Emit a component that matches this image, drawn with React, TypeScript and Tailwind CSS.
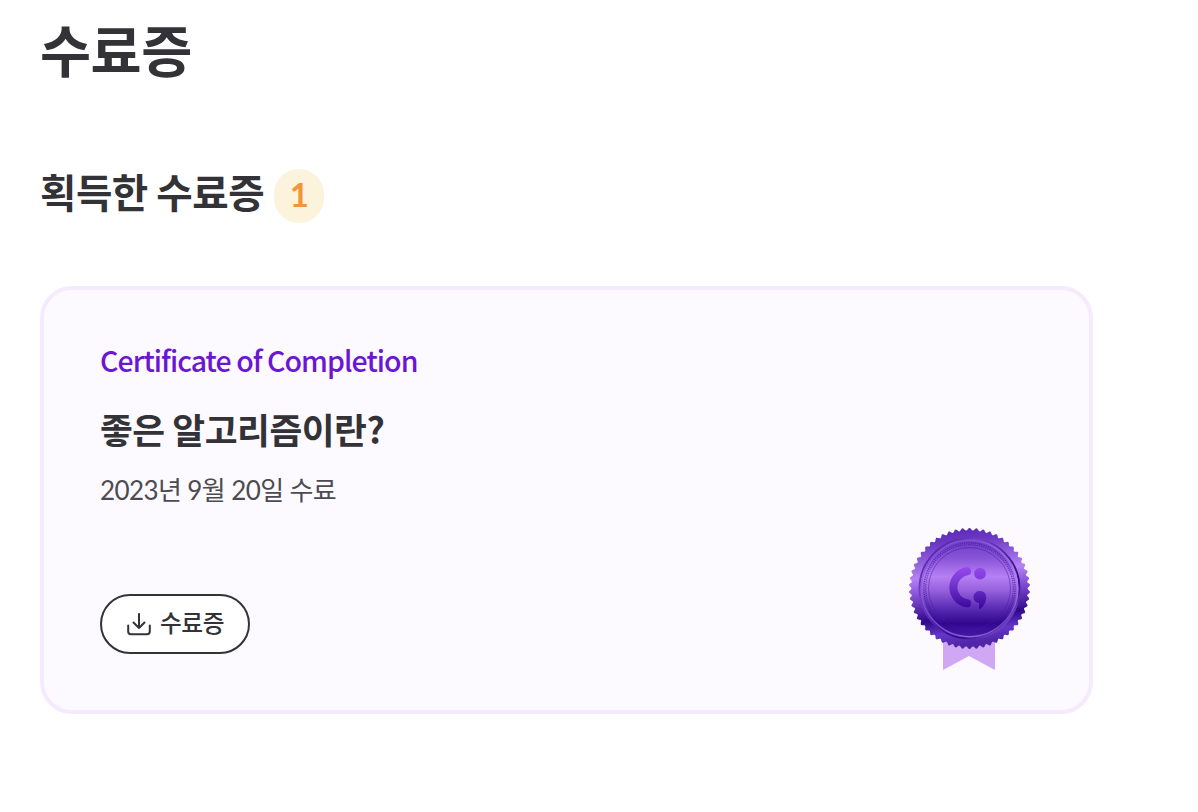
const BADGE_CENTER = 61.5;
const TEETH = 54;

// scalloped outline of the seal
const sealPath = (() => {
  const steps = TEETH * 8;
  const points: string[] = [];
  for (let i = 0; i < steps; i++) {
    const angle = (i / steps) * Math.PI * 2;
    const radius = 59.3 + Math.cos(angle * TEETH) * 1.3;
    const x = BADGE_CENTER + Math.sin(angle) * radius;
    const y = BADGE_CENTER - Math.cos(angle) * radius;
    points.push(`${x.toFixed(2)} ${y.toFixed(2)}`);
  }
  return `M${points.join("L")}Z`;
})();

const DownloadIcon = () => (
  <svg
    width="24"
    height="24"
    viewBox="0 0 24 24"
    fill="none"
    stroke="currentColor"
    strokeWidth="2"
    strokeLinecap="round"
    strokeLinejoin="round"
    aria-hidden="true"
  >
    <path d="M1.2 13.5v6a2.8 2.8 0 0 0 2.8 2.8h16a2.8 2.8 0 0 0 2.8-2.8v-6" />
    <path d="M12 2v14M6.5 10.5l5.5 5.5 5.5-5.5" />
  </svg>
);

const SealBadge = () => (
  <svg width="123" height="144" viewBox="0 0 123 144" aria-hidden="true">
    <defs>
      <linearGradient id="seal-edge" x1="0" y1="0" x2="0.12" y2="1">
        <stop offset="0" stopColor="#5527ac" />
        <stop offset="0.15" stopColor="#6936c4" />
        <stop offset="0.42" stopColor="#b583f2" />
        <stop offset="0.55" stopColor="#8852d6" />
        <stop offset="0.78" stopColor="#30088c" />
        <stop offset="0.9" stopColor="#6437c8" />
        <stop offset="1" stopColor="#5125a8" />
      </linearGradient>
      <linearGradient id="seal-face" x1="0" y1="0" x2="0" y2="1">
        <stop offset="0" stopColor="#6a3ac4" />
        <stop offset="0.2" stopColor="#8954d8" />
        <stop offset="0.38" stopColor="#b680f4" />
        <stop offset="0.52" stopColor="#9561dc" />
        <stop offset="0.68" stopColor="#6030b8" />
        <stop offset="0.85" stopColor="#31078f" />
        <stop offset="1" stopColor="#4c20ae" />
      </linearGradient>
      <linearGradient id="seal-ring" x1="0" y1="0" x2="1" y2="1">
        <stop offset="0" stopColor="#3d129b" />
        <stop offset="0.3" stopColor="#7240c8" />
        <stop offset="0.7" stopColor="#32098c" />
        <stop offset="1" stopColor="#aa79ed" />
      </linearGradient>
      <linearGradient id="seal-shine" x1="0" y1="0" x2="1" y2="0.8">
        <stop offset="0" stopColor="#7746cf" />
        <stop offset="0.4" stopColor="#9160de" />
        <stop offset="0.8" stopColor="#b184ef" />
        <stop offset="1" stopColor="#8857d8" />
      </linearGradient>
      <linearGradient id="seal-mark" gradientUnits="userSpaceOnUse" x1="0" y1="40" x2="0" y2="82">
        <stop offset="0" stopColor="#9748ed" />
        <stop offset="0.35" stopColor="#7a3ad4" />
        <stop offset="1" stopColor="#370596" />
      </linearGradient>
    </defs>
    <path d="M35 105h52v38L61 129 35 143Z" fill="#cfa7f5" />
    <path d={sealPath} fill="url(#seal-edge)" />
    <circle cx="61.5" cy="61.5" r="50" fill="url(#seal-face)" stroke="url(#seal-ring)" strokeWidth="1.8" />
    <circle cx="61.5" cy="61.5" r="48.2" fill="none" stroke="url(#seal-shine)" strokeOpacity="0.7" strokeWidth="1.4" />
    <circle cx="61.5" cy="61.5" r="45.6" fill="none" stroke="#3b1197" strokeOpacity="0.65" strokeWidth="1.4" strokeDasharray="1.2 1" />
    <circle cx="61.5" cy="61.5" r="43.8" fill="none" stroke="#3b1197" strokeOpacity="0.6" strokeWidth="1.2" strokeDasharray="1.2 1" />
    <circle cx="61.5" cy="61.5" r="41" fill="none" stroke="#43179f" strokeOpacity="0.7" strokeWidth="0.7" />
    <path d="M59 44.3A16.2 16.2 0 0 0 59 76.3" fill="none" stroke="url(#seal-mark)" strokeWidth="8" strokeLinecap="round" />
    <circle cx="72" cy="46.7" r="5.9" fill="url(#seal-mark)" />
    <path d="M72 64a6 6 0 0 1 6.2 6.2c0 5-2.4 9-6 11.6-.7.4-1.2.1-1.2-.6V76A6 6 0 0 1 72 64Z" fill="url(#seal-mark)" />
  </svg>
);

const App = () => {
  return (
    <main className="h-[812px] bg-white px-10 pt-1.5 font-['Noto_Sans_CJK_KR',sans-serif] tracking-[-0.03em] text-[#323237]">
      <h1 className="text-[55.5px] leading-[84px] font-bold">수료증</h1>

      <section className="pt-[75px]">
        <div className="flex items-start gap-2.5">
          <h2 className="text-[39.6px] leading-[52px] font-bold">획득한 수료증</h2>
          <span className="mt-1 flex h-[54px] w-[50px] items-center justify-center rounded-full bg-[#fcf3dc] pb-1 font-['Lato',sans-serif] text-[33px] leading-none font-bold text-[#f39438]">
            1
          </span>
        </div>

        <article className="mt-[63px] flex h-[428px] w-[1053px] justify-between rounded-[32px] border-4 border-[#f6eafe] bg-[#fcfaff] pt-[50px] pr-[58px] pl-14">
          <div>
            <p className="text-[28.5px] leading-10 font-medium tracking-[-0.033em] text-[#6a16d3]">Certificate of Completion</p>
            <h3 className="mt-6 text-[35.7px] leading-[50px] font-bold">좋은 알고리즘이란?</h3>
            <p className="mt-4 font-['Lato','Noto_Sans_CJK_KR',sans-serif] text-[26px] leading-10 tracking-[-0.023em] text-[#4b4b51]">
              2023년 9월 20일 수료
            </p>
            <button
              type="button"
              className="mt-[84px] flex h-[60px] w-[150px] items-center justify-center gap-[9px] rounded-full border-2 border-[#323237] bg-white pl-px text-[23.7px] font-medium"
            >
              <DownloadIcon />
              <span className="-mt-0.5">수료증</span>
            </button>
          </div>
          <div className="mt-[187px]">
            <SealBadge />
          </div>
        </article>
      </section>
    </main>
  );
};

export default App;
